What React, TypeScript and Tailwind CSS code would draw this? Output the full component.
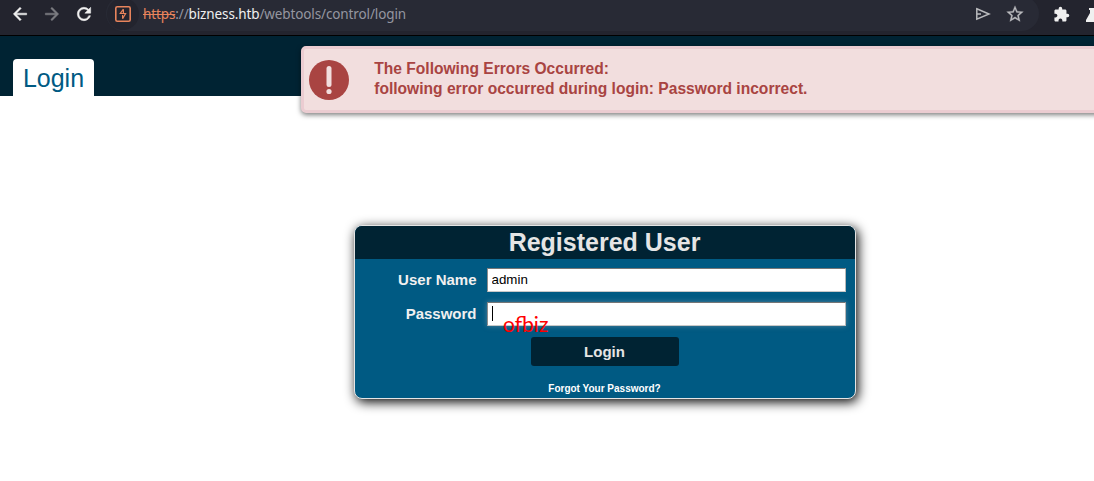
import React from "react";
import { MdExtension } from "react-icons/md";

function Glyph({ d, weight, className }: { d: string; weight: number; className?: string }) {
  return (
    <svg width="20" height="20" viewBox="0 0 24 24" className={className} fill="currentColor" stroke="currentColor" strokeWidth={weight}>
      <path d={d} />
    </svg>
  );
}

const BACK = "M20 11H7.83l5.59-5.59L12 4l-8 8 8 8 1.41-1.41L7.83 13H20v-2z";
const FORWARD = "m12 4-1.41 1.41L16.17 11H4v2h12.17l-5.58 5.59L12 20l8-8z";
const REFRESH =
  "M17.65 6.35A7.958 7.958 0 0 0 12 4c-4.42 0-7.99 3.58-7.99 8s3.57 8 7.99 8c3.73 0 6.84-2.55 7.73-6h-2.08A5.99 5.99 0 0 1 12 18c-3.31 0-6-2.69-6-6s2.69-6 6-6c1.66 0 3.14.69 4.22 1.78L13 11h7V4l-2.35 2.35z";
const STAR =
  "m22 9.24-7.19-.62L12 2 9.19 8.63 2 9.24l5.46 4.73L5.82 21 12 17.27 18.18 21l-1.63-7.03L22 9.24zM12 15.4l-3.76 2.27 1-4.28-3.32-2.88 4.38-.38L12 6.1l1.71 4.04 4.38.38-3.32 2.88 1 4.28L12 15.4z";

function BrowserBar() {
  return (
    <div className="flex h-9 w-[1094px] shrink-0 overflow-hidden border-b border-black bg-[#23242e]">
      <div className="flex h-[28px] w-[106px] shrink-0 items-center gap-3 pl-[10px] text-[#f0f0f0]">
        <Glyph d={BACK} weight={0.6} />
        <Glyph d={FORWARD} weight={0.6} className="text-[#7c7d82]" />
        <Glyph d={REFRESH} weight={0.6} />
      </div>
      <div className="-mt-1 flex h-[35px] w-[933px] shrink-0 items-center rounded-full bg-[#282a35] pl-px pr-[14px]">
        <span className="flex size-8 shrink-0 items-center justify-center rounded-full bg-[#23242e]">
          <svg width="16" height="16" viewBox="0 0 16 16" className="shrink-0" fill="none" stroke="#e8845c">
            <rect x="0.8" y="0.8" width="14.4" height="14.4" rx="1.5" strokeWidth="1.6" />
            <path d="M8.4 3.2 5.3 7.5H10.6L7.6 12.8M8.4 3.2V7.5M7.6 12.8V9" strokeWidth="1.2" />
          </svg>
        </span>
        <div className="ml-1 flex-1 whitespace-pre pt-px font-['Noto_Sans',sans-serif] text-[13.5px] leading-5 tracking-[-0.12px] text-[#9596a0]">
          <span className="text-[#e8845c] line-through">https</span>://<span className="text-[#f0f0f0]">bizness.htb</span>/webtools/control/login
        </div>
        <svg width="16" height="14" viewBox="0 0 16 14" className="mr-[14px] shrink-0" fill="none" stroke="#b9babd" strokeWidth="1.5">
          <path d="M1.8 1.8 14 7 1.8 12.2ZM1.8 7H6" />
        </svg>
        <Glyph d={STAR} weight={0.3} className="shrink-0 text-[#b9babd]" />
      </div>
      <div className="flex h-[29px] shrink-0 items-center pl-[13.5px] text-[#f0f0f0]">
        <MdExtension size={17} className="shrink-0" />
        <svg width="16" height="14" viewBox="0 0 16 14" className="ml-4 shrink-0" fill="currentColor">
          <path d="M3 0h10v2h-1v3l4 7v2H0v-2l4-7V2H3Z" />
        </svg>
      </div>
    </div>
  );
}

function ErrorBanner() {
  return (
    <div className="absolute left-[301px] top-[46px] flex h-[67px] w-[810px] rounded-[5px] border-[3px] border-[#ebccd1] bg-[#f2dede] font-bold text-[#a94442] shadow-[0_2px_5px_rgba(0,0,0,0.5)]">
      <svg width="40" height="40" viewBox="0 0 40 40" className="ml-[5px] mt-[11px] shrink-0">
        <circle cx="20" cy="20" r="20" fill="#a94442" />
        <rect x="17.5" y="6" width="5" height="21" rx="2.5" fill="#f2dede" />
        <circle cx="20" cy="31.5" r="2.6" fill="#f2dede" />
      </svg>
      <div className="ml-[25.2px] mt-[10px] whitespace-nowrap text-[15.6px] leading-5">
        <p>The Following Errors Occurred:</p>
        <p>following error occurred during login: Password incorrect.</p>
      </div>
    </div>
  );
}

const inputClass =
  "h-6 w-[359px] border border-t-[#767676] border-r-[#b8b8b8] border-b-[#c8c8c8] border-l-[#8c8c8c] bg-white px-[3.5px] text-[13.33px] text-black outline-none";

function LoginCard() {
  return (
    <form
      onSubmit={(e) => e.preventDefault()}
      className="ml-[354px] mt-[129px] flex h-[174px] w-[502px] flex-col overflow-hidden rounded-[8px] border border-[#e5e5e5] bg-[#005a83] text-[#f0f0f0] shadow-[2px_3px_12px_#000]"
    >
      <h1 className="h-[33px] shrink-0 bg-[#002333] pr-px text-center text-[25px] font-bold leading-8 text-[#e5e5e5]">Registered User</h1>
      <label className="mt-[9px] flex h-6 items-center justify-end gap-[10.5px] pr-[9px] text-[15px] font-bold">
        User Name
        <input className={inputClass + " pb-px font-normal"} defaultValue="admin" />
      </label>
      <label className="relative mt-[10px] flex h-6 items-center justify-end gap-[10.5px] pr-[9px] text-[15px] font-bold">
        Password
        <span className={inputClass + " shadow-[0_0_5px_rgba(160,170,180,0.5)]"}>
          <span className="mt-[3px] block h-[15px] w-px bg-black" />
        </span>
        <span className="absolute left-[148px] top-[10px] font-[Lato,sans-serif] text-[21px] font-normal leading-6 text-[#ff0000]">ofbiz</span>
      </label>
      <button className="mt-[11px] h-[29px] w-[148px] shrink-0 self-center rounded-[3px] bg-[#002333] pl-1.5 pr-[7px] pt-px text-[15px] font-bold text-[#e5e5e5]">Login</button>
      <a className="mt-[17px] pr-px text-center text-[10px] font-bold leading-3 text-white">Forgot Your Password?</a>
    </form>
  );
}

export default function App() {
  return (
    <div className="relative h-[481px] w-[1094px] overflow-hidden bg-white font-['Liberation_Sans',Arial,sans-serif]">
      <BrowserBar />
      <header className="flex h-[60px] items-end bg-[#002333] pl-[13px]">
        <div className="h-[37px] w-[81px] rounded-t-[4px] bg-white text-center text-[25px] leading-[38px] text-[#005a83]">Login</div>
      </header>
      <ErrorBanner />
      <LoginCard />
    </div>
  );
}
